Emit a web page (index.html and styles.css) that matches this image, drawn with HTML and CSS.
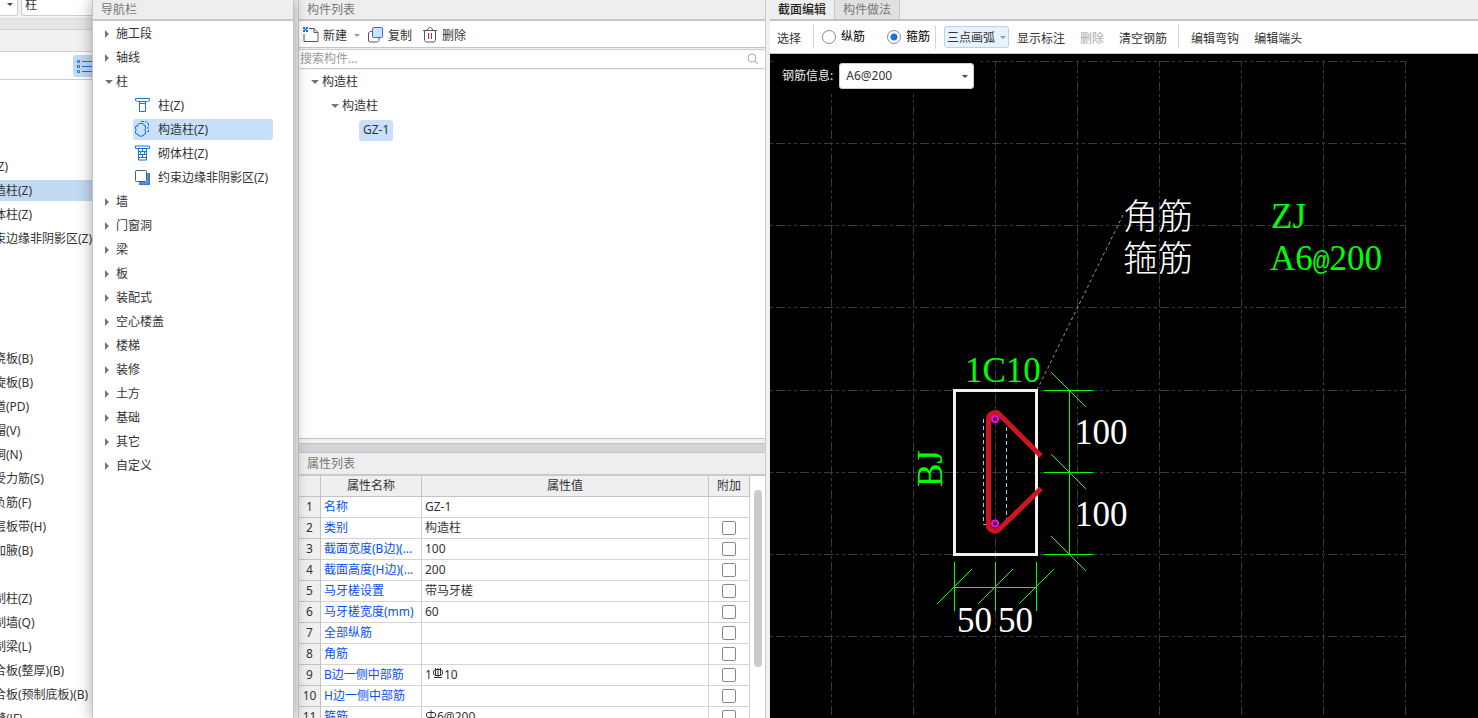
FILE: index.html
```html
<!DOCTYPE html>
<html lang="zh-CN">
<head>
<meta charset="utf-8">
<title>构造柱</title>
<link rel="stylesheet" href="styles.css">
</head>
<body>
<div class="app">
  <aside class="back">
    <div class="back-top">
      <button class="back-drop" type="button" aria-label="▾"><span class="caret"></span></button>
      <button class="back-type" type="button">柱</button>
    </div>
    <div class="back-band"></div>
    <div class="back-title"></div>
    <div class="back-tools">
      <button class="list-btn" type="button" aria-label="☰">
        <svg width="20" height="16" fill="none" stroke="#1a73e0"><path d="M1.500 1.500h2v2h-2zM1.500 6.500h2v2h-2zM1.500 11.500h2v2h-2zM6 2.500h14M6 7.500h14M6 12.500h14"/></svg>
      </button>
    </div>
    <ul class="back-list">
      <li>(Z)</li><li class="on">造柱(Z)</li><li>体柱(Z)</li><li>束边缘非阴影区(Z)</li>
    </ul>
    <ul class="back-list slabs">
      <li>浇板(B)</li><li>旋板(B)</li><li>道(PD)</li><li>帽(V)</li><li>洞(N)</li><li>受力筋(S)</li><li>负筋(F)</li><li>层板带(H)</li><li>加腋(B)</li>
    </ul>
    <ul class="back-list precast">
      <li>制柱(Z)</li><li>制墙(Q)</li><li>制梁(L)</li><li>合板(整厚)(B)</li><li>合板(预制底板)(B)</li><li>缝(JF)</li>
    </ul>
  </aside>

  <nav class="nav">
    <h2 class="title">导航栏</h2>
    <ul class="tree">
      <li><i class="tri"></i>施工段</li>
      <li><i class="tri"></i>轴线</li>
      <li><i class="tri open"></i>柱</li>
      <li class="child"><a href="#z"><svg width="16" height="16" fill="none" stroke="#1a73e0"><path d="M.5 1.500h14v2l-2 1h-10l-2-1zM4.500 4.500v10h6v-10M4.500 6.500h6"/></svg>柱(Z)</a></li>
      <li class="child on"><a href="#gz"><svg width="16" height="16" fill="none"><path d="M6 .5h5l1 1v1h1.500v3.500l-1 1 1 1v2.500h-2" stroke="#46608a" stroke-dasharray="3 1"/><path d="M4 2.500h4l1 1v1.500h1.500v3l-1 1 1 1v3H9v1l-1 1H4l-1-1v-1H1l-.5-1v-2l1-1-1-1V6L1 5H3V3.500z" stroke="#1a73e0"/></svg>构造柱(Z)</a></li>
      <li class="child"><a href="#qt"><svg width="16" height="16" fill="none" stroke="#1a73e0"><path d="M.5 1h14v2.500h-14zM3.500 4v11h8V4M3.500 6.500h8M3.500 9.500h8M3.500 12.500h8M7.500 4v2.500M5.500 6.500v3M9.500 6.500v3M7.500 9.500v3"/></svg>砌体柱(Z)</a></li>
      <li class="child"><a href="#ys"><svg width="16" height="16" fill="none"><path d="M12 4h3v12H4v-3h8z" fill="#4b8fe0"/><path d="M14.500 4v11.500H4" stroke="#1a73e0" stroke-dasharray="2 1"/><rect x=".5" y="1.500" width="11" height="11" rx="1" fill="#fff" stroke="#505868"/></svg>约束边缘非阴影区(Z)</a></li>
      <li><i class="tri"></i>墙</li>
      <li><i class="tri"></i>门窗洞</li>
      <li><i class="tri"></i>梁</li>
      <li><i class="tri"></i>板</li>
      <li><i class="tri"></i>装配式</li>
      <li><i class="tri"></i>空心楼盖</li>
      <li><i class="tri"></i>楼梯</li>
      <li><i class="tri"></i>装修</li>
      <li><i class="tri"></i>土方</li>
      <li><i class="tri"></i>基础</li>
      <li><i class="tri"></i>其它</li>
      <li><i class="tri"></i>自定义</li>
    </ul>
  </nav>

  <section class="middle">
    <h2 class="title">构件列表</h2>
    <div class="tools">
      <button type="button"><svg width="16" height="16" fill="none" stroke="#505868"><path d="M6 1.500h5l4 4v9h-14V7M11 1.500V5.500h4"/><path d="M0 0h2v2H0zM3 0h2v2H3zM1.500 1.500h2v2h-2zM0 3h2v2H0zM3 3h2v2H3z" fill="#1a73e0" stroke="none"/></svg>新建</button>
      <span class="caret soft"></span>
      <button type="button" class="copy"><svg width="16" height="16" fill="none"><path d="M4 4.500H2l-1.500 1.500v8l1 1h8l1.500-1.500V11" stroke="#505868"/><rect x="4.500" y=".5" width="10" height="10" rx="1" fill="#cfe1fb" stroke="#1a73e0"/></svg>复制</button>
      <button type="button" class="del"><svg width="14" height="16" fill="none" stroke="#505868"><path d="M0 3.500h14M1.500 4v9.500l1.500 1.500h8l1.500-1.500V4M4 3l1-1.500 1.500-1h1l1.500 1 1 1.500"/><path d="M5.500 6v6M8.500 6v6" stroke="#d32030"/></svg>删除</button>
    </div>
    <label class="search">
      <input type="text" placeholder="搜索构件..." aria-label="搜索构件...">
      <svg width="12" height="12" fill="none" stroke="#aaa"><circle cx="5" cy="5" r="4"/><path d="M8 8l3 3"/></svg>
    </label>
    <ul class="tree parts">
      <li class="l1"><i class="tri open"></i>构造柱</li>
      <li class="l2"><i class="tri open"></i>构造柱</li>
      <li class="l3"><span>GZ-1</span></li>
    </ul>
    <div class="splitter"></div>
    <h2 class="title">属性列表</h2>
    <div class="props">
      <table>
        <thead><tr><th class="c-no"></th><th class="c-name">属性名称</th><th>属性值</th><th class="c-add">附加</th></tr></thead>
        <tbody>
          <tr><th>1</th><td>名称</td><td>GZ-1</td><td></td></tr>
          <tr><th>2</th><td>类别</td><td>构造柱</td><td><input type="checkbox" aria-label="类别"></td></tr>
          <tr><th>3</th><td>截面宽度(B边)(...</td><td>100</td><td><input type="checkbox" aria-label="截面宽度"></td></tr>
          <tr><th>4</th><td>截面高度(H边)(...</td><td>200</td><td><input type="checkbox" aria-label="截面高度"></td></tr>
          <tr><th>5</th><td>马牙槎设置</td><td>带马牙槎</td><td><input type="checkbox" aria-label="马牙槎设置"></td></tr>
          <tr><th>6</th><td>马牙槎宽度(mm)</td><td>60</td><td><input type="checkbox" aria-label="马牙槎宽度"></td></tr>
          <tr><th>7</th><td>全部纵筋</td><td></td><td><input type="checkbox" aria-label="全部纵筋"></td></tr>
          <tr><th>8</th><td>角筋</td><td></td><td><input type="checkbox" aria-label="角筋"></td></tr>
          <tr><th>9</th><td>B边一侧中部筋</td><td>1<svg class="bar" width="12" height="11" fill="none" stroke="#333"><path d="M3.500 1.500h5l2 1.500v3l-2 1.500h-5l-2-1.500v-3zM6 0v9M3.500 0v7.500M8.500 0v7.500M2 9.500h8"/></svg>10</td><td><input type="checkbox" aria-label="B边一侧中部筋"></td></tr>
          <tr><th>10</th><td>H边一侧中部筋</td><td></td><td><input type="checkbox" aria-label="H边一侧中部筋"></td></tr>
          <tr><th>11</th><td>箍筋</td><td><svg class="bar" width="12" height="11" fill="none" stroke="#333"><path d="M3 2.500h6l1.500 1v3l-1.500 1H3l-1.500-1v-3zM6 0v10M2 10.500h8"/></svg>6@200</td><td><input type="checkbox" aria-label="箍筋"></td></tr>
        </tbody>
      </table>
      <div class="scroll"><div class="thumb"></div></div>
    </div>
  </section>

  <main class="editor">
    <div class="tabs" role="tablist">
      <button role="tab" aria-selected="true" class="active" type="button">截面编辑</button>
      <button role="tab" aria-selected="false" type="button">构件做法</button>
    </div>
    <div class="bar-tools">
      <button type="button">选择</button>
      <span class="sep"></span>
      <label class="radio"><input type="radio" name="kind">纵筋</label>
      <label class="radio second"><input type="radio" name="kind" checked>箍筋</label>
      <span class="sep"></span>
      <button type="button" class="arc">三点画弧<span class="caret soft"></span></button>
      <button type="button">显示标注</button>
      <button type="button" disabled>删除</button>
      <button type="button">清空钢筋</button>
      <span class="sep wide"></span>
      <button type="button">编辑弯钩</button>
      <button type="button">编辑端头</button>
    </div>
    <div class="canvas">
      <svg class="drawing" width="100%" height="100%">
        <g transform="translate(-770 -54)" fill="none">
          <g class="grid">
            <path class="rows" d="M770 61.500H1406M770 143.500H1406M770 225.500H1406M770 307.500H1406M770 390.500H1406M770 472.500H1406M770 554.500H1406M770 636.500H1406"/>
            <path class="cols" d="M831.500 61V718M913.500 61V718M995.500 61V718M1077.500 61V718M1159.500 61V718M1241.500 61V718M1323.500 61V718M1405.500 61V718"/>
          </g>
          <path class="leader" d="M1037 390L1124 213"/>
          <rect class="column" x="954.500" y="390.500" width="82" height="164"/>
          <path class="core" d="M983.500 419V524.500H988M1006.500 427V524"/>
          <path class="stirrup" d="M1041 456L1000 415A6.500 6.500 0 0 0 988.500 419V523.500A6.500 6.500 0 0 0 1000 528.500L1041 488.500"/>
          <g class="rebar"><circle cx="995" cy="419" r="3"/><circle cx="995" cy="523.500" r="3"/></g>
          <path class="dim" d="M1069.500 390V555M1044 390.500H1093M1044 472.500H1093M1044 554.500H1093M954 587.500H1037M954.500 562V611M995.500 562V611M1036.500 562V611"/>
          <path class="dim" d="M1051 372L1086 407M1051 454L1086 489M1051 536L1086 571M937 604L972 569M978 604L1013 569M1019 604L1054 569"/>
          <g class="note">
            <text x="1075" y="444">100</text>
            <text x="1075" y="526">100</text>
            <text x="957" y="632">50</text>
            <text x="998" y="632">50</text>
            <text x="1123" y="229">角筋</text>
            <text x="1123" y="271">箍筋</text>
          </g>
          <g class="note green">
            <text x="965" y="382">1C10</text>
            <text x="1271" y="228">ZJ</text>
            <text x="1270" y="270">A6<tspan class="at">@</tspan>200</text>
            <text transform="translate(942 487) rotate(-90)">BJ</text>
          </g>
        </g>
      </svg>
      <div class="info">
        <label for="steel">钢筋信息:</label>
        <div class="picker"><select id="steel"><option>A6@200</option></select><span class="caret"></span></div>
      </div>
    </div>
  </main>
</div>
</body>
</html>
```
FILE: styles.css
```css
* { box-sizing: border-box; }
html, body { height: 100%; margin: 0; }
body {
  font: 12px/20px "Noto Sans", "Noto Sans CJK SC", sans-serif;
  color: #333;
  background: #f0f0f0;
  overflow: hidden;
}
ul { list-style: none; margin: 0; padding: 0; }
button, input, select { font: inherit; color: inherit; }
button { background: none; border: 0; padding: 0; white-space: nowrap; }
a { color: inherit; text-decoration: none; }

.app { display: flex; height: 100vh; }

.caret { flex: none; width: 0; border: 3px solid transparent; border-top-color: #444; border-bottom: 0; }
.caret.soft { border-top-color: #999; }

/* window lying behind the navigation panel */
.back { flex: none; width: 92px; background: #fff; overflow: hidden; white-space: nowrap; }
.back-top { display: flex; gap: 3px; height: 19px; background: #f2f2f2; border-bottom: 1px solid #ddd; }
.back-drop { display: flex; width: 18px; padding: 3px 6px 0 7px; height: 16px; background: #fff; border: 1px solid #ccc; border-width: 0 1px 1px 0; border-radius: 0 0 3px; }
.back-type { flex: 1; height: 16px; padding: 0 0 5px 3px; line-height: 10px; text-align: left; background: #fff; border: 1px solid #ccc; border-width: 0 0 1px 1px; border-radius: 0 0 0 3px; }
.back-band { height: 11px; background: #e6e6e6; border-bottom: 1px solid #d0d0d0; }
.back-title { height: 22px; background: #f1f1f1; border-bottom: 1px solid #d0d0d0; }
.back-tools { display: flex; justify-content: flex-end; height: 28px; padding-top: 3px; border-bottom: 1px solid #ccc; }
.list-btn { display: flex; width: 19px; height: 22px; padding: 4px 0 0 3px; background: #c0daf5; border-radius: 3px 0 0 3px; overflow: hidden; }
.back-list { display: flex; flex-direction: column; margin-top: 75px; }
.back-list.slabs { margin-top: 96px; }
.back-list.precast { margin-top: 24px; }
.back-list li { height: 21px; margin: 1px 0 2px; line-height: 22px; text-indent: -6px; }
.back-list li.on { background: #c1d9f2; }

.title { flex: none; margin: 0; height: 21px; padding-left: 8px; font-size: 12px; font-weight: 400; line-height: 19px; color: #777; background: #eee; border-bottom: 2px solid #c8c9cc; }

.nav { position: relative; flex: none; width: 202px; background: #fff; border: 1px solid #c4c4c4; border-width: 0 1px; box-shadow: 0 0 14px rgba(0, 0, 0, .35); }
.tree li { display: flex; align-items: center; height: 24px; padding-left: 12px; }
.nav .tree li { padding-top: 1px; }
.tri { flex: none; width: 11px; height: 8px; }
.tri::before { content: ""; display: block; width: 0; border: 4px solid transparent; border-left-color: #777; border-right: 0; }
.tri.open { height: 4px; }
.tri.open::before { border: 4px solid transparent; border-top-color: #777; border-bottom: 0; }
.nav .tree .child { padding: 0 20px 0 40px; }
.child a { display: flex; flex: 1; align-items: center; gap: 7px; height: 21px; padding: 2px 0 0 2px; border-radius: 3px; white-space: nowrap; }
.child svg { margin-top: -2px; }
.child.on a { background: #c9e0fa; }

.middle { display: flex; flex-direction: column; flex: none; width: 468px; margin-left: 4px; border: 1px solid #c8c9cc; border-width: 0 1px; }
.tools { display: flex; flex: none; align-items: center; height: 27px; padding: 3px 0 0 4px; background: #fff; border-bottom: 1px solid #c4c4c4; }
.tools button { display: flex; align-items: center; gap: 4px; }
.tools svg { margin-top: -2px; }
.tools .caret { margin: 0 8px 0 7px; }
.tools .del { margin-left: 11px; gap: 5px; }
.search { display: flex; flex: none; align-items: center; height: 20px; margin: 1px 0; padding: 0 6px 0 1px; background: #fff; border: 1px solid #ccc; border-width: 1px 0; border-radius: 3px; }
.search input { flex: 1; min-width: 0; height: 18px; padding: 0; border: 0; outline: 0; background: none; }
.search input::placeholder { color: #999; opacity: 1; }
.parts { flex: none; height: 369px; background: #fff; border-bottom: 1px solid #c4c4c4; }
.parts .l2 { padding-left: 32px; }
.parts .l3 { padding-left: 60px; }
.parts .l3 span { height: 21px; padding: 0 4px; background: #c9e0fa; border-radius: 3px; }
.splitter { flex: none; height: 10px; margin-top: 4px; background: #d2d4da; border: 1px solid #c0c3c9; border-width: 1px 0; }
.middle .splitter + .title { height: 23px; line-height: 21px; }

.props { display: flex; flex: 1; align-items: flex-start; min-height: 0; overflow: hidden; background: #fff; }
table { flex: 1; border-collapse: separate; border-spacing: 0; table-layout: fixed; width: 100%; }
th, td { height: 21px; padding: 0 3px; font-weight: 400; line-height: 20px; text-align: left; white-space: nowrap; overflow: hidden; border: 1px solid #d4d4d4; border-width: 0 1px 1px 0; }
thead th { text-align: center; background: #efefef; border-color: #c4c4c4; }
tbody th { padding: 0; text-align: center; background: #efefef; border-color: #c4c4c4; }
.c-no { width: 22px; }
.c-name { width: 101px; }
.c-add { width: 41px; }
td:nth-child(2) { color: #0a50f5; }
td:last-child { padding: 0; text-align: center; }
td input { appearance: none; display: block; width: 14px; height: 14px; margin: 0 auto; background: #fff; border: 1px solid #888; border-radius: 2px; }
.bar { vertical-align: 0; }
.scroll { flex: none; width: 15px; padding: 14px 3px 0 4px; }
.thumb { height: 177px; border-radius: 4px; background: #cbcbcb; }

.editor { display: flex; flex-direction: column; flex: 1; min-width: 0; margin-left: 4px; }
.tabs { display: flex; flex: none; height: 21px; background: #eee; border-bottom: 2px solid #bfc4c9; }
.tabs button { padding: 0 8px; color: #777; line-height: 19px; background: #e1e1e1; border: 1px solid #c8c8c8; border-width: 0 1px 0 0; }
.tabs .active { color: #222; font-weight: 500; background: #eee; }
.bar-tools { display: flex; flex: none; align-items: center; height: 33px; padding-left: 7px; background: #fff; border-bottom: 1px solid #c4c4c4; }
.bar-tools button { padding-top: 3px; }
.bar-tools button + button { margin-left: 15px; }
.bar-tools .arc { display: flex; align-items: center; gap: 5px; height: 22px; padding: 1px 2px 0; margin-right: -7px; background: #e8f2fd; border: 1px solid #b5d3f2; border-radius: 3px; }
.bar-tools button:disabled { color: #aaa; }
.sep { flex: none; width: 1px; height: 24px; margin: 0 8px 0 12px; background: #d5d5d5; }
.sep.wide { margin: 0 12px 0 11px; }
.radio { display: flex; align-items: center; gap: 5px; color: #000; white-space: nowrap; }
.radio.second { margin-left: 22px; }
.radio + .sep { margin-left: 5px; }
.radio input { appearance: none; width: 14px; height: 14px; margin: 0; border: 1px solid #888; border-radius: 50%; background: #fff; }
.radio input:checked { background: radial-gradient(circle, #1a73e0 3px, #fff 4px); }

.canvas { position: relative; flex: 1; min-height: 0; background: #000; overflow: hidden; }
.drawing { display: block; }
.grid { stroke: #343d47; stroke-dasharray: 9 3 3 3 3 3; }
.rows { stroke-dashoffset: 18px; }
.cols { stroke-dashoffset: 3px; }
.leader { stroke: #999; stroke-dasharray: 3 3; }
.column { stroke: #f0f0f0; stroke-width: 3; }
.core { stroke: #a9c9ef; stroke-dasharray: 4 3; }
.stirrup { stroke: #cb1820; stroke-width: 5; }
.rebar { stroke: #f0f; stroke-width: 2; }
.dim { stroke: #0f0; }
.note { fill: #fff; font: 300 35px "Liberation Serif", "Noto Sans CJK SC", serif; }
.green { fill: #0f0; }
.at { font-family: "Liberation Mono", monospace; font-size: 28px; }
.info { position: absolute; top: 5px; left: 3px; display: flex; align-items: center; gap: 6px; padding: 4px 6px 4px 9px; color: #eee; background: #000; }
.picker { position: relative; display: flex; }
.picker select { appearance: none; width: 135px; height: 26px; padding: 0 6px; color: #333; background: #fff; border: 1px solid #ccc; border-radius: 3px; }
.picker .caret { position: absolute; right: 6px; top: 12px; }
```
